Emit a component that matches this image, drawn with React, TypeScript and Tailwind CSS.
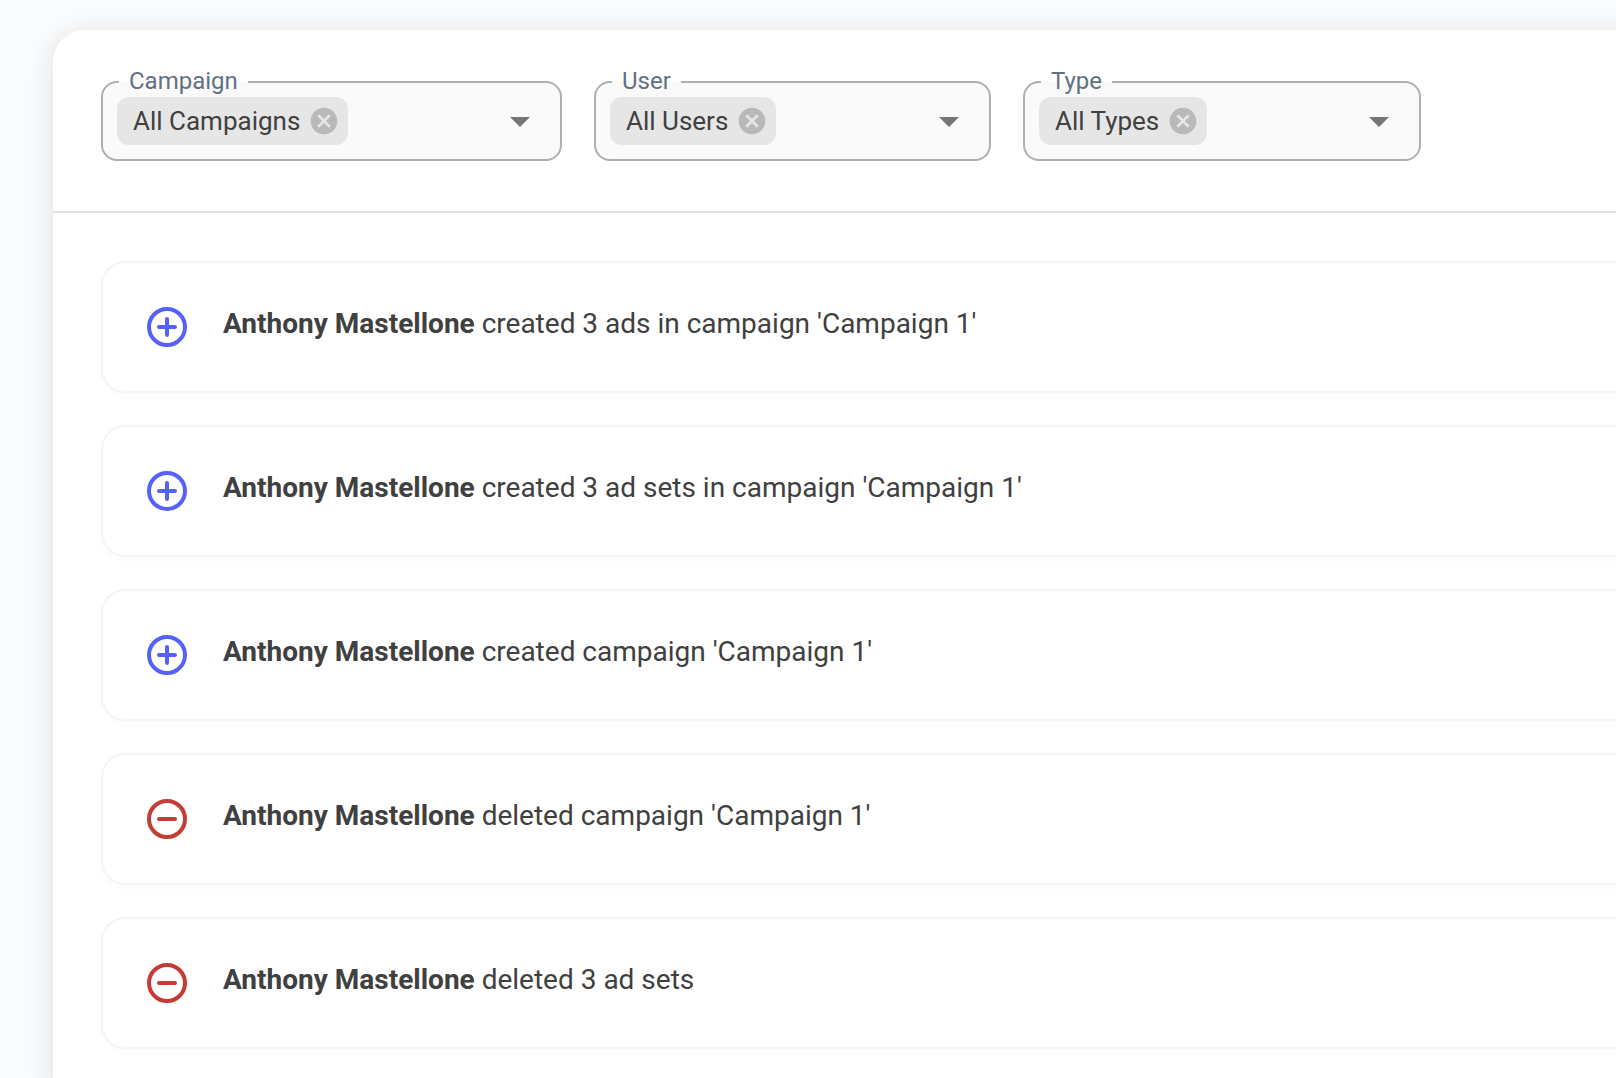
import React, { useState } from 'react';

type ActivityKind = 'created' | 'deleted';

interface Activity {
  id: number;
  user: string;
  kind: ActivityKind;
  text: string;
}

interface FilterProps {
  id: string;
  label: string;
  allLabel: string;
  className: string;
}

const activities: Activity[] = [
  { id: 1, user: 'Anthony Mastellone', kind: 'created', text: "created 3 ads in campaign 'Campaign 1'" },
  { id: 2, user: 'Anthony Mastellone', kind: 'created', text: "created 3 ad sets in campaign 'Campaign 1'" },
  { id: 3, user: 'Anthony Mastellone', kind: 'created', text: "created campaign 'Campaign 1'" },
  { id: 4, user: 'Anthony Mastellone', kind: 'deleted', text: "deleted campaign 'Campaign 1'" },
  { id: 5, user: 'Anthony Mastellone', kind: 'deleted', text: 'deleted 3 ad sets' },
];

const ActivityIcon: React.FC<{ kind: ActivityKind }> = ({ kind }) => (
  <svg
    className={`w-12 h-12 shrink-0 ${kind === 'created' ? 'text-[#5561f8]' : 'text-[#c33c35]'}`}
    fill="none"
    stroke="currentColor"
    strokeWidth={2}
    strokeLinecap="round"
    viewBox="0 0 24 24"
    aria-hidden="true"
  >
    <circle cx="12" cy="12" r="9" />
    <path d={kind === 'created' ? 'M8 12h8M12 8v8' : 'M8 12h8'} />
  </svg>
);

const Filter: React.FC<FilterProps> = ({ id, label, allLabel, className }) => {
  const [selected, setSelected] = useState(true);

  return (
    <fieldset
      className={`min-w-0 rounded-2xl border-2 border-[#afafaf] bg-[#fafafa] pl-3.5 pr-4 pb-3.5 ${className}`}
    >
      <legend className="ml-0.5 px-2.5 pb-0.5 text-2xl leading-7 text-[#637083]">
        <label htmlFor={id} className="block">
          {label}
        </label>
      </legend>
      <div className="flex h-12 items-center">
        {selected && (
          <span className="flex h-12 shrink-0 items-center gap-2 rounded-xl bg-[#e6e6e6] pl-4 pr-2 text-[26px] text-[#404040]">
            {allLabel}
            <button type="button" aria-label={`Remove ${allLabel}`} onClick={() => setSelected(false)}>
              <svg className="block h-8 w-8 text-[#b9b9b9]" fill="currentColor" viewBox="0 0 24 24">
                <path d="M12 2C6.47 2 2 6.47 2 12s4.47 10 10 10 10-4.47 10-10S17.53 2 12 2zm5 13.59L15.59 17 12 13.41 8.41 17 7 15.59 10.59 12 7 8.41 8.41 7 12 10.59 15.59 7 17 8.41 13.41 12 17 15.59z" />
              </svg>
            </button>
          </span>
        )}
        <input id={id} type="text" className="h-12 min-w-0 flex-1 bg-transparent px-2 text-[26px] outline-none" />
        <button type="button" aria-label={`Open ${label}`} className="shrink-0">
          <svg className="block h-12 w-12 text-[#757575]" fill="currentColor" viewBox="0 0 24 24">
            <path d="M7 10l5 5 5-5z" />
          </svg>
        </button>
      </div>
    </fieldset>
  );
};

const App: React.FC = () => {
  return (
    <div className="flex min-h-screen flex-col overflow-hidden bg-[#fbfcfe] pl-[53px] pt-[30px] font-['Roboto',sans-serif] text-[#404040]">
      {/* The panel runs off the right edge of the window */}
      <main className="-mr-12 flex-1 rounded-tl-[32px] bg-white shadow-[0_4px_32px_rgba(0,0,0,0.12)]">
        {/* Filters */}
        <div className="flex flex-wrap gap-8 border-b-2 border-[#e0e0e0] pb-[50px] pl-12 pt-[37px]">
          <Filter id="campaign" label="Campaign" allLabel="All Campaigns" className="w-[461px]" />
          <Filter id="user" label="User" allLabel="All Users" className="w-[397px]" />
          <Filter id="type" label="Type" allLabel="All Types" className="w-[398px]" />
        </div>

        {/* Activity list */}
        <ul className="flex flex-col gap-8 py-12 pl-12">
          {activities.map((activity) => (
            <li
              key={activity.id}
              className="flex items-start gap-8 rounded-l-3xl border-2 border-r-0 border-[#f5f5f5] bg-white p-10 shadow-[0_4px_8px_rgba(0,0,0,0.02)]"
            >
              <ActivityIcon kind={activity.kind} />
              <p className="text-[28px] leading-[42px]">
                <strong className="font-bold">{activity.user}</strong> {activity.text}
              </p>
            </li>
          ))}
        </ul>
      </main>
    </div>
  );
};

export default App;
